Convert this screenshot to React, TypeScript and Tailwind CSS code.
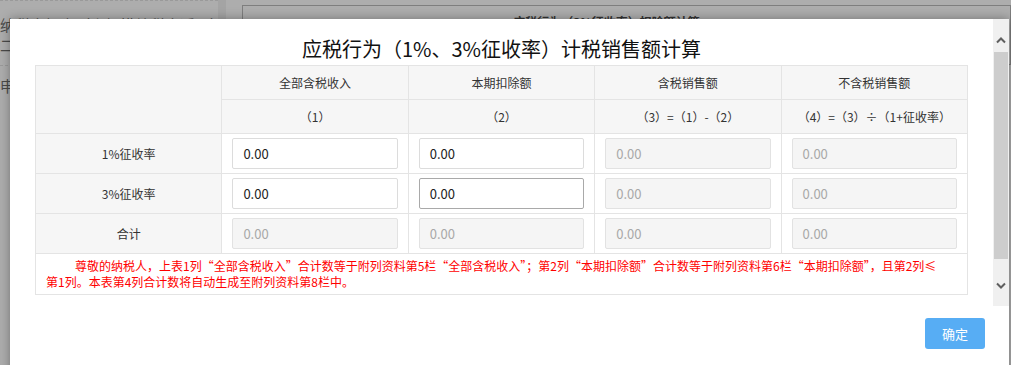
const cols = ["全部含税收入", "本期扣除额", "含税销售额", "不含税销售额"];
const formulas = ["（1）", "（2）", "（3）=（1）-（2）", "（4）=（3）÷（1+征收率）"];

const rows = [
  { label: "1%征收率", editable: [true, true, false, false] },
  { label: "3%征收率", editable: [true, true, false, false], focused: 1 },
  { label: "合计", editable: [false, false, false, false] },
];

const ValueBox = ({ editable, focused }: { editable: boolean; focused?: boolean }) => (
  <div
    className={
      "h-[31px] rounded-[2px] border px-[10px] text-[13px] leading-[29px] " +
      (editable
        ? focused
          ? "border-[#a9a9a9] bg-white text-[#222]"
          : "border-[#dcdcdc] bg-white text-[#222]"
        : "border-[#e2e2e2] bg-[#f5f5f5] text-[#a8a8a8]")
    }
  >
    0.00
  </div>
);

const Chevron = ({ down }: { down?: boolean }) => (
  <svg width="10" height="7" viewBox="0 0 10 7">
    <path
      d={down ? "M1 1.5 L5 5.5 L9 1.5" : "M1 5.5 L5 1.5 L9 5.5"}
      fill="none"
      stroke="#5f5f5f"
      strokeWidth="2"
    />
  </svg>
);

const App = () => {
  return (
    <div className="relative h-[365px] w-[1011px] overflow-hidden bg-[#adadad] font-['Noto_Sans_CJK_SC',sans-serif]">
      {/* page behind the overlay */}
      <div className="flex h-full">
        <div className="w-[218px] border-t border-dashed border-[#9a9a9a] pt-[14px] text-[15px] leading-[20px] text-[#4a4a4a]">
          <div className="whitespace-nowrap">纳税人报表（小规模纳税人适用）</div>
          <div>二</div>
          <div className="mt-[10px] border-t border-dashed border-[#9a9a9a] pt-[10px]">申报表</div>
        </div>
        <div className="w-[8px] bg-[#a4a4a4]" />
        <div className="flex-1 pl-[16px] pt-[5px]">
          <div className="h-[60px] border border-[#7e7e7e] pr-[40px] pt-[7px] text-center text-[12px] font-bold text-[#333]">
            应税行为（3%征收率）扣除额计算
          </div>
        </div>
      </div>

      {/* modal */}
      <div className="absolute left-[10px] top-[19px] h-[360px] w-[999px] bg-white shadow-[0_0_10px_rgba(0,0,0,0.35)]">
        <div className="flex h-[287px]">
          <div className="flex-1 px-[25px] pt-[14px]">
            <div className="h-[32px] text-center text-[20px] leading-[32px] text-[#111]">
              应税行为（1%、3%征收率）计税销售额计算
            </div>
            <table className="w-full table-fixed border-collapse text-[12px] text-[#333]">
              <tbody>
                <tr className="h-[34px]">
                  <td rowSpan={2} className="border border-[#e4e4e4] bg-[#f6f6f6]" />
                  {cols.map((c) => (
                    <td key={c} className="border border-[#e4e4e4] bg-[#f6f6f6] text-center">
                      {c}
                    </td>
                  ))}
                </tr>
                <tr className="h-[34px]">
                  {formulas.map((f) => (
                    <td key={f} className="border border-[#e4e4e4] bg-[#f6f6f6] text-center">
                      {f}
                    </td>
                  ))}
                </tr>
                {rows.map((r) => (
                  <tr key={r.label} className="h-[40px]">
                    <td className="border border-[#e4e4e4] bg-[#f6f6f6] text-center">{r.label}</td>
                    {r.editable.map((e, i) => (
                      <td key={i} className="border border-[#e4e4e4] px-[10px] py-[4px]">
                        <ValueBox editable={e} focused={r.focused === i} />
                      </td>
                    ))}
                  </tr>
                ))}
                <tr className="h-[40px]">
                  <td
                    colSpan={5}
                    className="border border-[#e4e4e4] px-[10px] py-[4px] text-[12px] leading-[16px] text-[#ff0000]"
                  >
                    <div className="whitespace-nowrap pl-[29px]">
                      尊敬的纳税人，上表1列“全部含税收入”合计数等于附列资料第5栏“全部含税收入”；第2列“本期扣除额”合计数等于附列资料第6栏“本期扣除额”，且第2列≤
                    </div>
                    <div>第1列。本表第4列合计数将自动生成至附列资料第8栏中。</div>
                  </td>
                </tr>
              </tbody>
            </table>
          </div>
          <div className="flex w-[16px] flex-col bg-[#f0f0f0]">
            <div className="flex h-[33px] justify-center pt-[18px]">
              <Chevron />
            </div>
            <div className="mx-[1px] h-[207px] bg-[#cdcdcd]" />
            <div className="flex flex-1 justify-center pt-[23px]">
              <Chevron down />
            </div>
          </div>
        </div>
        <div className="flex justify-end pr-[24px] pt-[12px]">
          <button className="h-[31px] w-[60px] rounded-[3px] bg-[#57adf4] text-[13px] text-white">确定</button>
        </div>
      </div>
    </div>
  );
};

export default App;
